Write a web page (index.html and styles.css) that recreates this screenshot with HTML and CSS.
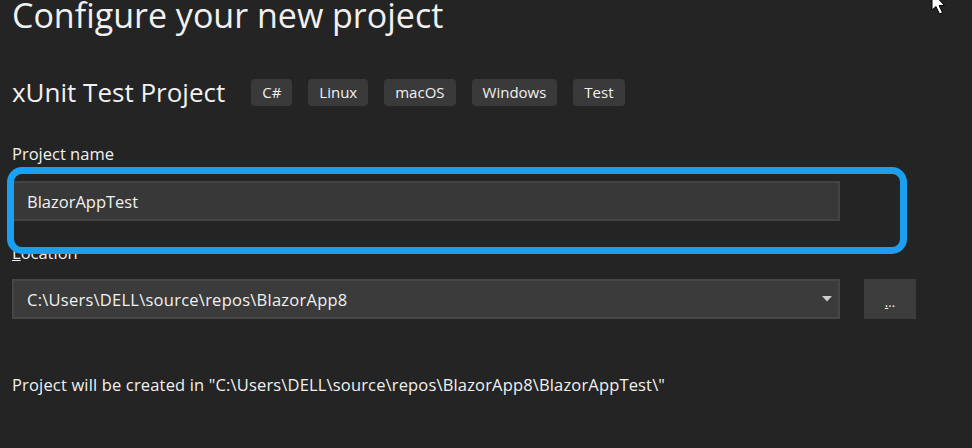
FILE: index.html
```html
<!DOCTYPE html>
<html lang="en">
<head>
<meta charset="utf-8">
<title>Configure your new project</title>
<link rel="stylesheet" href="styles.css">
</head>
<body>
<main class="page">
  <h1 class="title">Configure your new project</h1>

  <div class="template-row">
    <h2 class="template-name">xUnit Test Project</h2>
    <ul class="tags">
      <li class="tag">C#</li>
      <li class="tag">Linux</li>
      <li class="tag">macOS</li>
      <li class="tag">Windows</li>
      <li class="tag">Test</li>
    </ul>
  </div>

  <div class="field field-name">
    <label class="label" for="pname">Project name</label>
    <div class="input-holder">
      <input id="pname" class="text-input" type="text" value="BlazorAppTest">
      <div class="focus-ring"></div>
    </div>
  </div>

  <div class="field field-location">
    <label class="label label-location"><span class="access">L</span>ocation</label>
    <div class="location-row">
      <div class="combo">
        <span class="combo-text">C:\Users\DELL\source\repos\BlazorApp8</span>
        <svg class="combo-arrow" width="10" height="6" viewBox="0 0 10 6"><path d="M0 0 H10 L5 5.5 Z" fill="#cfcfcf"/></svg>
      </div>
      <button class="browse" type="button"><span class="access">.</span>..</button>
    </div>
  </div>

  <p class="info">Project will be created in "C:\Users\DELL\source\repos\BlazorApp8\BlazorAppTest\"</p>
</main>

<svg class="cursor" width="22" height="24" viewBox="0 0 22 24">
  <path d="M1 -8 L1 10 L5 6.5 L8.5 14 L11.5 12.6 L8 5.5 L13.5 5.5 Z" fill="#ffffff" stroke="#000000" stroke-width="1"/>
</svg>
</body>
</html>
```

FILE: styles.css
```css
html, body {
  margin: 0;
  padding: 0;
  background: #242424;
}

body {
  width: 972px;
  height: 448px;
  overflow: hidden;
  position: relative;
  color: #f1f1f1;
  font-family: "Open Sans", "Noto Sans", sans-serif;
}

.page {
  padding: 0 0 0 12px;
}

.title {
  margin: 0;
  font-size: 34px;
  font-weight: 400;
  line-height: 30px;
}

.template-row {
  margin-top: 49px;
  display: flex;
  align-items: center;
  height: 27px;
}

.template-name {
  margin: 0;
  font-size: 26px;
  font-weight: 400;
  line-height: 27px;
}

.tags {
  list-style: none;
  display: flex;
  gap: 16px;
  margin: 0 0 0 26px;
  padding: 0;
}

.tag {
  height: 27px;
  padding: 0 11px;
  border-radius: 4px;
  background: #3a3a3a;
  font-size: 15px;
  line-height: 27px;
}

.field {
  display: flex;
  flex-direction: column;
}

.field-name {
  margin-top: 38px;
}

.field-location {
  margin-top: 22px;
}

.label {
  font-size: 16.5px;
  line-height: 20px;
}

.access {
  text-decoration: underline;
}

.input-holder {
  position: relative;
  margin-top: 17px;
  width: 828px;
}

.text-input {
  box-sizing: border-box;
  width: 828px;
  height: 40px;
  margin: 0;
  padding: 0 0 0 13px;
  background: #383838;
  border: 2px solid #434343;
  color: #f1f1f1;
  font-family: inherit;
  font-size: 16.5px;
  outline: none;
  display: block;
}

.focus-ring {
  position: absolute;
  left: -5px;
  top: -14px;
  width: 886px;
  height: 73px;
  border: 7px solid #1b9ff1;
  border-radius: 15px;
  pointer-events: none;
}

.location-row {
  margin-top: 16px;
  display: flex;
  gap: 24px;
}

.combo {
  box-sizing: border-box;
  width: 828px;
  height: 40px;
  padding: 0 0 0 13px;
  background: #3b3b3b;
  border: 2px solid #464646;
  display: flex;
  align-items: center;
  justify-content: space-between;
  font-size: 16.5px;
}

.combo-text {
  letter-spacing: 0.25px;
}

.combo-arrow {
  margin-right: 6px;
}

.browse {
  box-sizing: border-box;
  width: 52px;
  height: 40px;
  margin: 0;
  padding: 0 0 10px;
  border: none;
  background: #3c3c3c;
  color: #f1f1f1;
  font-family: inherit;
  font-size: 13px;
  line-height: 13px;
  display: flex;
  align-items: flex-end;
  justify-content: center;
}

.info {
  margin: 56px 0 0;
  font-size: 16.5px;
  line-height: 20px;
  letter-spacing: 0.16px;
}

.cursor {
  position: absolute;
  left: 931px;
  top: 0;
}
```
